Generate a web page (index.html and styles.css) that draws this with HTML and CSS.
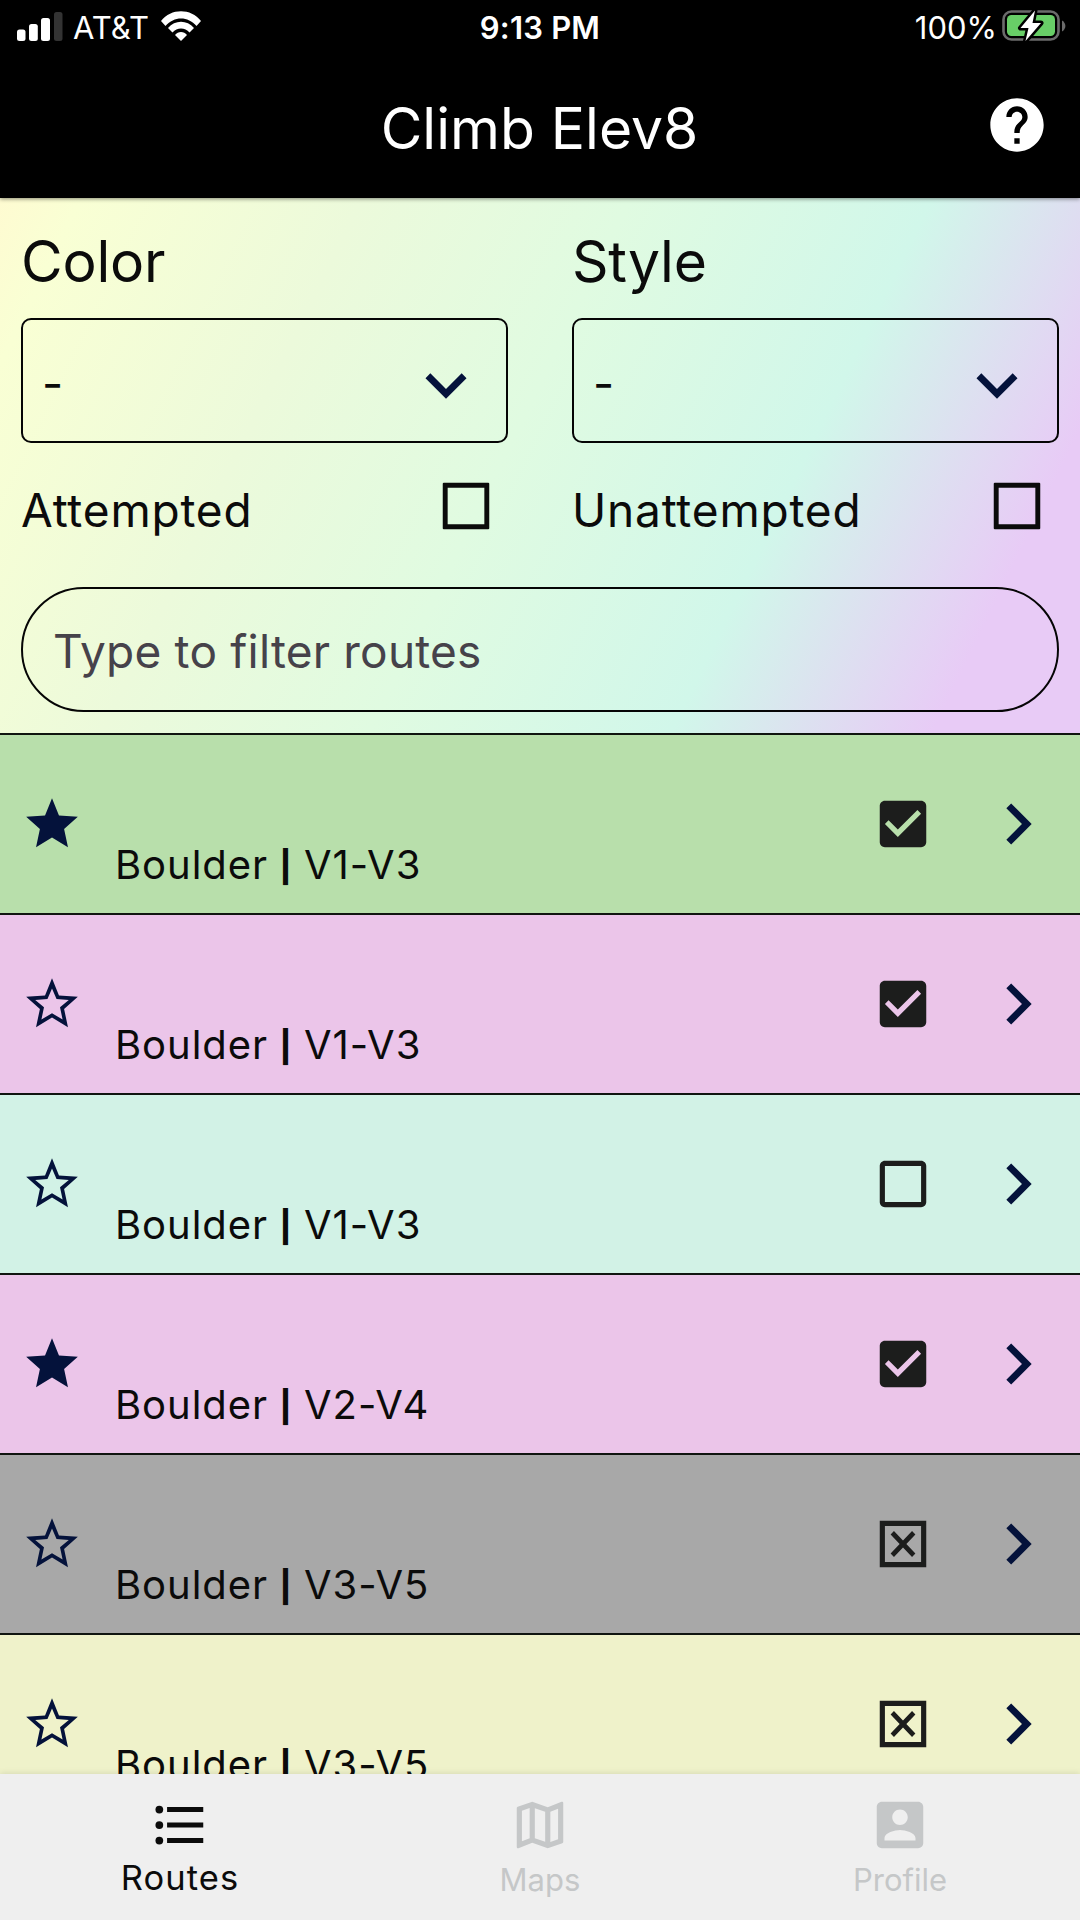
FILE: index.html
```html
<!DOCTYPE html>
<html lang="en">
<head>
<meta charset="utf-8">
<title>Climb Elev8</title>
<link rel="stylesheet" href="styles.css">
</head>
<body>
<svg class="defs" width="0" height="0">
  <symbol id="star" viewBox="0 0 24 24"><path d="M12 17.27 18.18 21l-1.5-7.1L22 9.24l-7.3-.5L12 2 9.3 8.74 2 9.24l5.32 4.66L5.82 21z"/></symbol>
  <symbol id="star-outline" viewBox="0 0 24 24"><path d="M22 9.24l-7.3-.5L12 2 9.3 8.74 2 9.24l5.32 4.66L5.82 21 12 17.27 18.18 21l-1.5-7.1L22 9.24zM12 15.6l-4.1 2.4 1-4.7-3.4-2.85 4.75-.35L12 6l1.75 4.1 4.75.35-3.4 2.85 1 4.7L12 15.6z"/></symbol>
  <symbol id="checked" viewBox="0 0 24 24"><path d="M19 3H5c-1.11 0-2 .9-2 2v14c0 1.1.89 2 2 2h14c1.11 0 2-.9 2-2V5c0-1.1-.89-2-2-2zm-9 14l-5-5 1.41-1.41L10 14.17l7.59-7.59L19 8l-9 9z"/></symbol>
  <symbol id="unchecked" viewBox="0 0 24 24"><path d="M19 5v14H5V5h14m0-2H5c-1.1 0-2 .9-2 2v14c0 1.1.9 2 2 2h14c1.1 0 2-.9 2-2V5c0-1.1-.9-2-2-2z"/></symbol>
  <symbol id="crossed" viewBox="0 0 24 24"><path d="M3 3v18h18V3zm16 16H5V5h14zM8.5 17l3.5-3.6 3.5 3.6 1.3-1.3-3.5-3.7 3.5-3.7L15.500 7 12 10.6 8.500 7 7.200 8.300l3.500 3.700-3.500 3.700z"/></symbol>
  <symbol id="square" viewBox="0 0 24 24"><path d="M3.300 3h17.400l.3.300v17.400l-.3.300H3.300l-.3-.3V3.300zM4.900 4.900v14.200h14.200V4.900z"/></symbol>
  <symbol id="right" viewBox="0 0 24 24"><path d="M10 6 8.590 7.410 13.170 12l-4.580 4.590L10 18l6-6z"/></symbol>
  <symbol id="down" viewBox="0 0 24 24"><path d="M7.410 8.590 12 13.170l4.590-4.580L18 10l-6 6-6-6z"/></symbol>
</svg>
<div class="phone">
  <header class="header">
    <div class="status">
      <div class="carrier">
        <svg class="signal" viewBox="0 0 46 29"><g fill="#fff"><rect x="0" y="17.500" width="8.500" height="11.500" rx="2.500"/><rect x="12" y="12" width="8.800" height="17" rx="2.500"/><rect x="24" y="6" width="9" height="23" rx="2.500"/></g><rect x="37" y="0" width="8.500" height="29" rx="2.500" fill="#333"/></svg>
        <span>AT&amp;T</span>
        <svg class="wifi" viewBox="0 0 40 30"><g fill="#fff"><path d="M0 10C10-3 30-3 40 10L35.500 15C27 5 13 5 4.500 15Z"/><path d="M7 17C14 8.500 26 8.500 33 17L28.500 21.500C24 16 16 16 11.500 21.500Z"/><path d="M14 24C17 20 23 20 26 24L20 30Z"/></g></svg>
      </div>
      <span class="clock">9:13 PM</span>
      <div class="power">
        <span>100%</span>
        <svg class="battery" viewBox="0 0 64 32"><rect x="1.500" y="1.500" width="55" height="28" rx="8" fill="none" stroke="#6b6b6b" stroke-width="2.600"/><rect x="5" y="5" width="48" height="21" rx="4.500" fill="#68ce67"/><path d="M60 10.500c4.500 2.500 4.500 8.500 0 11z" fill="#6b6b6b"/><path d="M33 .5 18.500 18h8l-3 13L39 13h-8.500z" fill="#fff" stroke="#000" stroke-width="5" stroke-linejoin="round"/><path d="M33 .5 18.500 18h8l-3 13L39 13h-8.500z" fill="#fff"/></svg>
      </div>
    </div>
    <div class="titlebar">
      <h1 class="title">Climb Elev8</h1>
      <svg class="help" viewBox="0 0 24 24"><path d="M12 2C6.480 2 2 6.480 2 12s4.480 10 10 10 10-4.480 10-10S17.520 2 12 2zm1 17h-2v-2h2v2zm2.070-7.750l-.9.920C13.450 12.900 13 13.500 13 15h-2v-.5c0-1.100.45-2.100 1.170-2.830l1.240-1.260c.37-.36.59-.86.59-1.410 0-1.100-.9-2-2-2s-2 .9-2 2H8c0-2.210 1.790-4 4-4s4 1.790 4 4c0 .88-.36 1.680-.93 2.250z"/></svg>
    </div>
  </header>

  <section class="filters">
    <div class="fields">
      <div class="field">
        <div class="label">Color</div>
        <div class="select"><span class="value">-</span><svg class="chevron"><use href="#down"/></svg></div>
        <div class="toggle"><span class="toggle-name">Attempted</span><svg class="icon"><use href="#square"/></svg></div>
      </div>
      <div class="field">
        <div class="label">Style</div>
        <div class="select"><span class="value">-</span><svg class="chevron"><use href="#down"/></svg></div>
        <div class="toggle"><span class="toggle-name">Unattempted</span><svg class="icon"><use href="#square"/></svg></div>
      </div>
    </div>
    <div class="search">Type to filter routes</div>
  </section>

  <main class="routes">
    <div class="route green"><svg class="star"><use href="#star"/></svg><div class="grade">Boulder<b>|</b>V1-V3</div><svg class="icon"><use href="#checked"/></svg><svg class="chevron"><use href="#right"/></svg></div>
    <div class="route pink"><svg class="star"><use href="#star-outline"/></svg><div class="grade">Boulder<b>|</b>V1-V3</div><svg class="icon"><use href="#checked"/></svg><svg class="chevron"><use href="#right"/></svg></div>
    <div class="route mint"><svg class="star"><use href="#star-outline"/></svg><div class="grade">Boulder<b>|</b>V1-V3</div><svg class="icon"><use href="#unchecked"/></svg><svg class="chevron"><use href="#right"/></svg></div>
    <div class="route pink"><svg class="star"><use href="#star"/></svg><div class="grade">Boulder<b>|</b>V2-V4</div><svg class="icon"><use href="#checked"/></svg><svg class="chevron"><use href="#right"/></svg></div>
    <div class="route gray"><svg class="star"><use href="#star-outline"/></svg><div class="grade">Boulder<b>|</b>V3-V5</div><svg class="icon"><use href="#crossed"/></svg><svg class="chevron"><use href="#right"/></svg></div>
    <div class="route yellow"><svg class="star"><use href="#star-outline"/></svg><div class="grade">Boulder<b>|</b>V3-V5</div><svg class="icon"><use href="#crossed"/></svg><svg class="chevron"><use href="#right"/></svg></div>
  </main>

  <nav class="tabs">
    <div class="tab active"><svg class="icon" viewBox="0 0 24 24"><path d="M7 5h14v2H7zM7 11h14v2H7zM7 17h14v2H7z"/><circle cx="4" cy="6" r="1.500"/><circle cx="4" cy="12" r="1.500"/><circle cx="4" cy="18" r="1.500"/></svg><span class="tab-name">Routes</span></div>
    <div class="tab"><svg class="icon" viewBox="0 0 24 24"><path d="M20.500 3l-.16.03L15 5.100 9 3 3.360 4.900c-.21.07-.36.25-.36.48V20.500c0 .28.22.5.5.5l.16-.03L9 18.900l6 2.100 5.640-1.900c.21-.07.36-.25.36-.48V3.500c0-.28-.22-.5-.5-.5zM10 5.470l4 1.400v11.660l-4-1.400V5.470zm-5 .99l3-1.010v11.700l-3 1.160V6.460zm14 11.080l-3 1.010V6.860l3-1.160v11.840z"/></svg><span class="tab-name">Maps</span></div>
    <div class="tab"><svg class="icon" viewBox="0 0 24 24"><path d="M3 5v14c0 1.100.89 2 2 2h14c1.100 0 2-.9 2-2V5c0-1.100-.9-2-2-2H5c-1.110 0-2 .9-2 2zm12 4c0 1.660-1.340 3-3 3s-3-1.340-3-3 1.340-3 3-3 3 1.340 3 3zm-9 8c0-2 4-3.100 6-3.100s6 1.100 6 3.100v1H6v-1z"/></svg><span class="tab-name">Profile</span></div>
  </nav>
</div>
</body>
</html>
```
FILE: styles.css
```css
* { box-sizing: border-box; margin: 0; }
body { background: #000; font-family: Inter, "Noto Sans", sans-serif; color: #0b0b0b; }
.defs { display: block; }
svg { display: block; flex: none; fill: currentColor; }
.phone { width: 1080px; height: 1920px; display: flex; flex-direction: column; overflow: hidden; }
.icon { width: 62px; height: 62px; }
.chevron { width: 82px; height: 82px; color: #04123b; }

.header { height: 198px; flex: none; background: #000; color: #fff; position: relative; box-shadow: 0 1px 4px rgba(0,0,0,.45); }
.status { height: 55px; display: grid; grid-template-columns: 1fr auto 1fr; align-items: center; font-size: 31px; line-height: 36px; padding: 0 14px; }
.carrier, .power { display: flex; align-items: center; }
.carrier { padding-left: 3px; }
.power { justify-content: flex-end; }
.signal { width: 46px; height: 29px; margin: -3px 10px 0 0; }
.wifi { width: 40px; height: 30px; margin: -4px 1px 0 12px; }
.clock { font-weight: 600; letter-spacing: .2px; }
.battery { width: 64px; height: 32px; margin: -3px 0 0 5px; }
.titlebar { height: 143px; display: grid; grid-template-columns: 1fr auto 1fr; align-items: center; }
.title { grid-column: 2; font-size: 57px; font-weight: 400; line-height: 70px; padding: 4px 1px 0 0; }
.help { width: 64px; height: 64px; justify-self: end; margin: -3px 31px 0 0; }

.filters { height: 535px; flex: none; padding: 23px 21px 0; background: linear-gradient(116deg, #fefbd1 0%, #f9ffd4 6%, #ecfadb 27%, #e0fbe1 47%, #d1f7ea 69.5%, #e8cbf6 89%); }
.fields { display: grid; grid-template-columns: 1fr 1fr; gap: 64px; }
.label { font-size: 57px; line-height: 80px; padding-top: 1px; letter-spacing: -.2px; }
.select { height: 125px; margin-top: 16px; border: 2px solid #050505; border-radius: 10px; display: flex; align-items: center; justify-content: space-between; padding: 0 19px 0 19px; font-size: 46px; line-height: 60px; }
.value { padding-top: 5px; }
.select .chevron { margin-top: 9px; }
.toggle { height: 126px; display: flex; align-items: center; justify-content: space-between; padding-right: 11px; font-size: 46px; line-height: 60px; letter-spacing: .8px; }
.toggle-name { padding-top: 8px; }
.search { height: 125px; margin-top: 18px; border: 2px solid #050505; border-radius: 63px; display: flex; align-items: center; padding: 3px 30px 0; font-size: 46px; letter-spacing: .2px; color: #46424a; }

.routes { flex: 1; min-height: 0; overflow: hidden; }
.route { height: 180px; border-top: 2px solid #101510; display: flex; align-items: center; padding-left: 21px; padding-right: 21px; }
.star { width: 62px; height: 62px; color: #04123b; }
.grade { flex: 1; display: flex; padding: 81px 0 0 32px; font-size: 40px; line-height: 60px; letter-spacing: .95px; }
.grade b { font-size: 31px; font-weight: 800; width: 36px; text-align: center; line-height: 64px; margin-bottom: -4px; }
.route .icon { color: #1c1d1c; margin-right: 43px; }
.green { background: #b8dfab; }
.pink { background: #ebc5e9; }
.mint { background: #d2f2e6; }
.gray { background: #a8a8a8; }
.yellow { background: #eff2ca; }

.tabs { height: 146px; flex: none; position: relative; background: #efefef; display: grid; grid-template-columns: repeat(3, 1fr); padding-top: 20px; box-shadow: 0 -1px 6px rgba(0,0,0,.1); }
.tab { display: flex; flex-direction: column; align-items: center; color: #c5c7c8; font-size: 31px; line-height: 42px; }
.tab-name { margin: 3px 0 0; }
.active { color: #0b0b0b; font-size: 34.5px; }
.active .tab-name { margin: 1px 0 0; letter-spacing: 1.1px; }
```
